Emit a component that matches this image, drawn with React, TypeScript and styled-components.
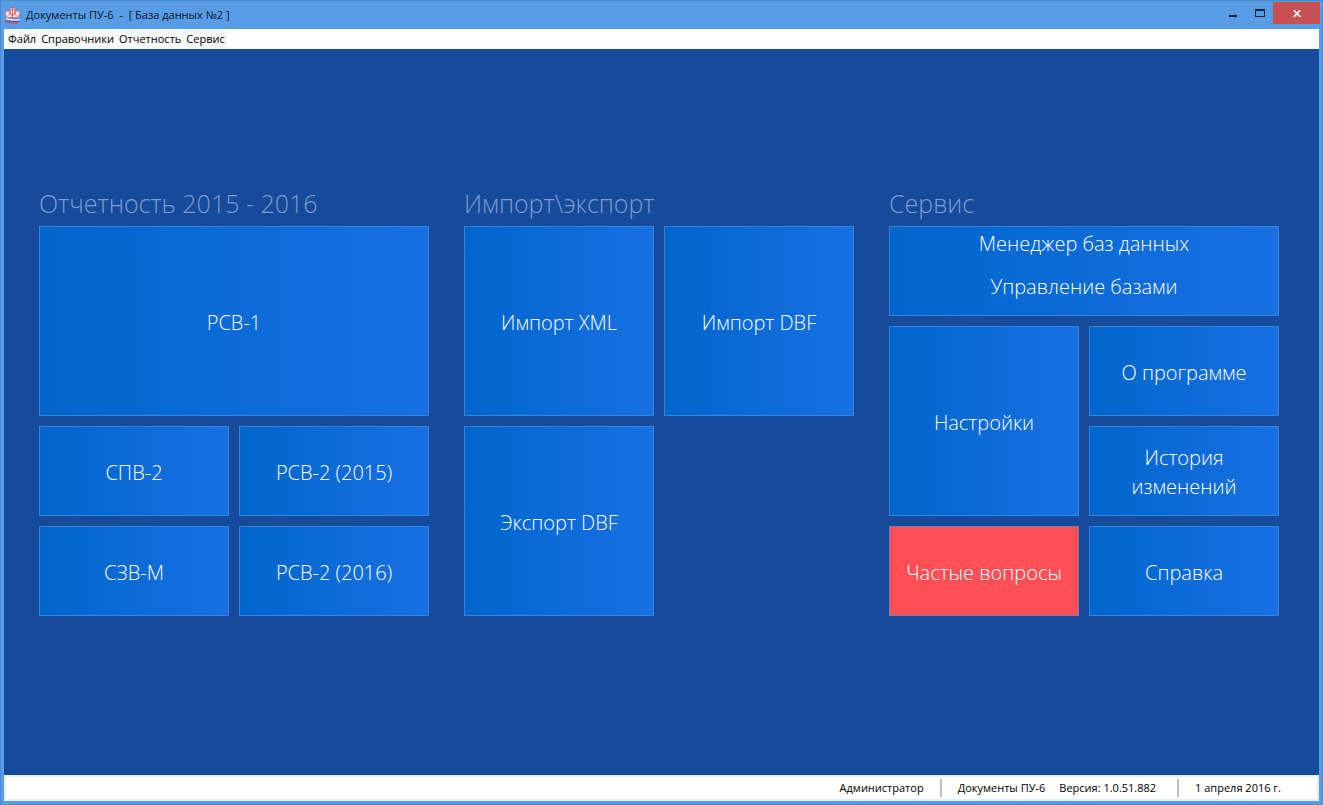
import React from "react";
import styled, { createGlobalStyle } from "styled-components";

const GlobalStyle = createGlobalStyle`
  *, *::before, *::after { box-sizing: border-box; }
  body { margin: 0; font-family: "Open Sans", "Noto Sans", sans-serif; font-size: 11px; line-height: 16px; color: #000; }
  button { font: inherit; border: 0; margin: 0; padding: 0; background: none; cursor: default; }
`;

const Window = styled.div`
  min-height: 100vh;
  display: flex;
  flex-direction: column;
  background: #579ce5;
  border: 1px solid #4a8ad0;
  padding: 0 3px 3px;
`;

const TitleBar = styled.header`
  display: flex;
  align-items: center;
  height: 28px;
`;

const Title = styled.h1`
  flex: 1;
  margin: 0 0 0 4px;
  font-size: 11px;
  font-weight: 400;
  white-space: pre;
  color: #0a1626;
`;

const WindowControls = styled.div`
  display: flex;
  align-self: flex-start;
  height: 23px;
  padding-top: 1px;
  margin-right: -1px;
`;

const ControlButton = styled.button<{ $close?: boolean }>`
  display: flex;
  align-items: center;
  justify-content: center;
  width: ${(p) => (p.$close ? 47 : 27)}px;
  background: ${(p) => (p.$close ? "#c75050" : "transparent")};
`;

const MenuBar = styled.nav`
  display: flex;
  align-items: center;
  gap: 1px;
  height: 20px;
  padding-left: 2px;
  background: #fff;
`;

const MenuItem = styled.button`
  && { padding: 0 2px; }
  background: #f7f8fa;
  height: 18px;
`;

const Desktop = styled.main`
  flex: 1;
  display: grid;
  grid-template-columns: repeat(3, minmax(0, 1fr));
  align-content: center;
  gap: 35px;
  padding: 0 40px 20px 35px;
  background: #164b9b;
`;

const GroupTitle = styled.h2`
  margin: 0;
  font-size: 25px;
  font-weight: 300;
  line-height: 30px;
  padding-bottom: 8px;
  white-space: nowrap;
  color: #7d9bd0;
`;

const TileGrid = styled.div`
  display: grid;
  grid-template-columns: repeat(2, minmax(0, 1fr));
  grid-auto-rows: 90px;
  gap: 10px;
`;

const Tile = styled.button<{ $cols?: number; $rows?: number; $accent?: boolean }>`
  && {
    display: flex;
    flex-direction: column;
    align-items: center;
    justify-content: center;
    gap: 14px;
    grid-column: span ${(p) => p.$cols ?? 1};
    grid-row: span ${(p) => p.$rows ?? 1};
    padding: 2px 12px 0;
    border: 1px solid ${(p) => (p.$accent ? "#7d7fb8" : "#3384dc")};
    background: ${(p) => (p.$accent ? "#fd4f55" : "linear-gradient(90deg, #0066cc, #1870e2)")};
    color: #fff;
    font-size: 20px;
    font-weight: 300;
    line-height: 29px;
  }
`;

const TallTile = styled(Tile)`
  && { justify-content: flex-start; }
`;

const StatusBar = styled.footer`
  display: flex;
  align-items: center;
  justify-content: flex-end;
  gap: 16px;
  height: 26px;
  padding-right: 36px;
  background: #fff;
  border: 2px solid #e4eef9;
`;

const Divider = styled.span`
  width: 2px;
  height: 18px;
  background: #bdbdbd;
`;

const StatusPair = styled.span`
  display: flex;
  gap: 14px;
  padding-right: 5px;
`;

type TileSpec = { lines: string[]; cols?: number; rows?: number; accent?: boolean };
type Group = { title: string; tiles: TileSpec[] };

const groups: Group[] = [
  {
    title: "Отчетность 2015 - 2016",
    tiles: [
      { lines: ["РСВ-1"], cols: 2, rows: 2 },
      { lines: ["СПВ-2"] },
      { lines: ["РСВ-2 (2015)"] },
      { lines: ["СЗВ-М"] },
      { lines: ["РСВ-2 (2016)"] },
    ],
  },
  {
    title: "Импорт\\экспорт",
    tiles: [
      { lines: ["Импорт XML"], rows: 2 },
      { lines: ["Импорт DBF"], rows: 2 },
      { lines: ["Экспорт DBF"], rows: 2 },
    ],
  },
  {
    title: "Сервис",
    tiles: [
      { lines: ["Менеджер баз данных", "Управление базами"], cols: 2 },
      { lines: ["Настройки"], rows: 2 },
      { lines: ["О программе"] },
      { lines: ["История изменений"] },
      { lines: ["Частые вопросы"], accent: true },
      { lines: ["Справка"] },
    ],
  },
];

const AppLogo = () => (
  <svg width="18" height="18" viewBox="0 0 18 18" aria-hidden="true">
    <path d="M3 12 1 8c0-3 2-4 5-3 0-2 1-4 2.500-4S11 3 11 5c3-1 5 0 5 3l-2 4z" fill="#fbe6e9" />
    <g fill="none" stroke="#e0525b" strokeWidth=".9">
      <path d="M8.500 0v11.500M7 1.500h3M3.500 11.500 1.500 8.500C.5 5.500 3 4 5 5.500c1.500 1.500.5 3.500-.5 4M13.500 11.500l2-3c1-3-1.500-4.500-3.500-3-1.500 1.500-.5 3.500.5 4" />
      <ellipse cx="8.500" cy="6" rx="2.500" ry="3.200" />
      <path d="M3.500 11.500h10" />
    </g>
    <path d="M2 12.500c4-.5 8 2 14 .5v2c-6 1.500-9-1-14-.5z" fill="#f3f5f9" />
    <path d="M2 14c4-.3 9 1.800 14 .2v1.300c-6 1.500-10-.5-14-.2z" fill="#3a5a98" />
    <path d="M1 15.300c5-.3 9 1.500 13 .5v1.400c-5 .8-9-.4-13-.2z" fill="#c05a68" />
  </svg>
);

export default function App() {
  return (
    <>
      <GlobalStyle />
      <Window>
        <TitleBar>
          <AppLogo />
          <Title>{"Документы ПУ-6  -  [ База данных №2 ]"}</Title>
          <WindowControls>
            <ControlButton aria-label="Свернуть">
              <svg width="8" height="10" aria-hidden="true">
                <path d="M0 7h8v2H0z" fill="#14253a" />
              </svg>
            </ControlButton>
            <ControlButton aria-label="Развернуть">
              <svg width="10" height="8" aria-hidden="true">
                <path d="M0 0h10v8H0zM1 2v5h8V2z" fillRule="evenodd" fill="#14253a" />
              </svg>
            </ControlButton>
            <ControlButton $close aria-label="Закрыть">
              <svg width="8" height="7" aria-hidden="true">
                <path d="M.7 0 7.300 7M7.300 0 .7 7" stroke="#fff" strokeWidth="1.700" />
              </svg>
            </ControlButton>
          </WindowControls>
        </TitleBar>
        <MenuBar>
          {["Файл", "Справочники", "Отчетность", "Сервис"].map((item) => (
            <MenuItem key={item}>{item}</MenuItem>
          ))}
        </MenuBar>
        <Desktop>
          {groups.map((group) => (
            <section key={group.title}>
              <GroupTitle>{group.title}</GroupTitle>
              <TileGrid>
                {group.tiles.map((tile) => {
                  const Kind = tile.lines.length > 1 ? TallTile : Tile;
                  return (
                    <Kind key={tile.lines[0]} $cols={tile.cols} $rows={tile.rows} $accent={tile.accent}>
                      {tile.lines.map((line) => (
                        <span key={line}>{line}</span>
                      ))}
                    </Kind>
                  );
                })}
              </TileGrid>
            </section>
          ))}
        </Desktop>
        <StatusBar>
          <span>Администратор</span>
          <Divider />
          <StatusPair>
            <span>Документы ПУ-6</span>
            <span>Версия: 1.0.51.882</span>
          </StatusPair>
          <Divider />
          <time dateTime="2016-04-01">1 апреля 2016 г.</time>
        </StatusBar>
      </Window>
    </>
  );
}
